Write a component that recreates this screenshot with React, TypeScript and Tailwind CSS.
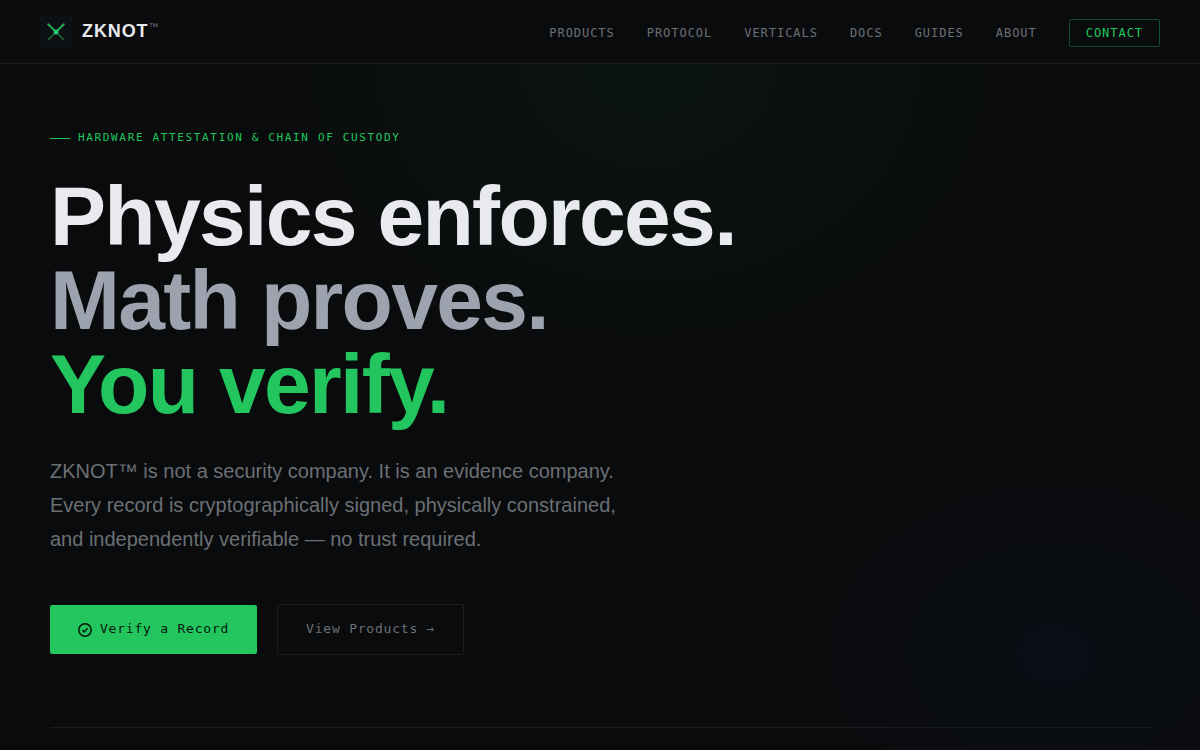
const navLinks = [
  { label: "Products", href: "#products" },
  { label: "Protocol", href: "#protocol" },
  { label: "Verticals", href: "#verticals" },
  { label: "Docs", href: "#docs" },
  { label: "Guides", href: "#guides" },
  { label: "About", href: "#about" },
]

function LogoMark() {
  return (
    <svg viewBox="0 0 32 32" className="size-8" fill="none" aria-hidden="true">
      <rect width="32" height="32" fill="#0e1114" />
      <g strokeLinecap="round">
        <path
          d="M16 16 8.2 23.8M16 16l7.8 7.8"
          stroke="#1a7038"
          strokeWidth="1.5"
        />
        <path
          d="M8.2 8.2 16 16M23.8 8.2 16 16"
          stroke="#22a956"
          strokeWidth="2"
        />
      </g>
      <circle cx="16" cy="16" r="2.5" fill="#2fc46e" />
    </svg>
  )
}

function CheckIcon() {
  return (
    <svg
      viewBox="0 0 14 14"
      className="size-3.5 translate-y-px"
      fill="none"
      stroke="currentColor"
      strokeWidth="1.5"
      aria-hidden="true"
    >
      <circle cx="7" cy="7" r="6.2" />
      <path d="m4.3 7 1.9 1.9 3.5-3.6" />
    </svg>
  )
}

function Header() {
  return (
    <header className="flex h-16 items-center justify-between border-b border-[#1a1d1f] bg-[#0a0b0d] px-10">
      <a href="#top" className="flex items-center gap-2.5">
        <LogoMark />
        <span className="flex items-start pb-0.5 text-lg leading-5 font-bold tracking-[0.05em] text-[#e8eaed]">
          ZKNOT
          <span className="text-[10px] leading-3 font-normal tracking-normal text-[#6b7280]">
            ™
          </span>
        </span>
      </a>

      <nav className="flex items-center gap-8 pt-0.5 font-['DejaVu_Sans_Mono',monospace] text-xs leading-3.5 tracking-[0.08em] text-[#6b7075] uppercase">
        {navLinks.map((link) => (
          <a key={link.label} href={link.href}>
            {link.label}
          </a>
        ))}
        <a
          href="#contact"
          className="rounded-xs border border-[#124a32] px-4 py-1.5 text-[#22c55e]"
        >
          Contact
        </a>
      </nav>
    </header>
  )
}

function Hero() {
  return (
    <section className="mx-auto max-w-[1100px] pt-[66px]">
      <p className="flex items-center gap-2 font-['DejaVu_Sans_Mono',monospace] text-[11px] leading-4 tracking-[0.15em] text-[#22c55e] uppercase">
        <span className="h-px w-5 bg-[#22c55e]" />
        Hardware Attestation &amp; Chain of Custody
      </p>

      <h1 className="mt-7 text-[7vw] leading-none font-bold tracking-[-0.02em] text-[#e8eaed]">
        <span className="block">Physics enforces.</span>
        <span className="block text-[#9ca3af]">Math proves.</span>
        <span className="block text-[#22c55e]">You verify.</span>
      </h1>

      <p className="mt-7 max-w-[580px] text-xl leading-[34px] text-[#6b7075]">
        ZKNOT™ is not a security company. It is an evidence company. Every
        record is cryptographically signed, physically constrained, and
        independently verifiable — no trust required.
      </p>

      <div className="mt-12 flex items-center gap-5 font-['DejaVu_Sans_Mono',monospace] text-[13px] leading-[17px] tracking-[0.06em]">
        <button
          type="button"
          className="flex items-center gap-2 rounded-xs bg-[#22c55e] px-7 pt-[15px] pb-[17px] text-[#06180c]"
        >
          <CheckIcon />
          Verify a Record
        </button>
        <button
          type="button"
          className="rounded-xs border border-[#1c1e21] px-7 pt-[15px] pb-[17px] text-[#6b7075]"
        >
          View Products →
        </button>
      </div>

      <hr className="mt-18 border-[#1a1d1f]" />
    </section>
  )
}

export default function App() {
  return (
    <div
      id="top"
      className="flex min-h-screen flex-col bg-[#0a0b0d] font-['Liberation_Sans',Arial,sans-serif]"
    >
      <Header />
      <main className="grow bg-[radial-gradient(ellipse_400px_320px_at_54%_0%,rgba(34,197,94,0.05),transparent),radial-gradient(ellipse_240px_180px_at_88%_86%,rgba(10,60,130,0.07),transparent)]">
        <Hero />
      </main>
    </div>
  )
}
